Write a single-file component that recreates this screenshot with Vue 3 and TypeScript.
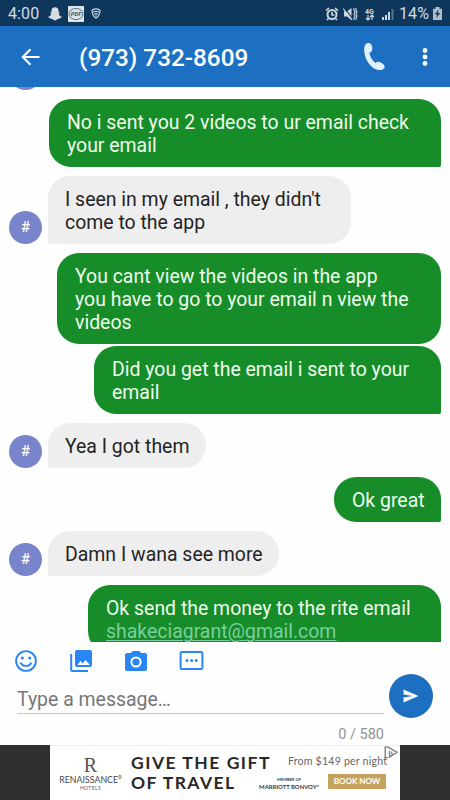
<script setup lang="ts">
interface Message {
  id: number
  sent: boolean
  lines: string[]
  width: number
  height: number
  link?: string
  grouped?: boolean
}

const messages: Message[] = [
  { id: 1, sent: true, lines: ['No i sent you 2 videos to ur email check', 'your email'], width: 392, height: 68 },
  { id: 2, sent: false, lines: ['I seen in my email , they didn\'t', 'come to the app'], width: 303, height: 68 },
  { id: 3, sent: true, lines: ['You cant view the videos in the app', 'you have to go to your email n view the', 'videos'], width: 384, height: 91, grouped: true },
  { id: 4, sent: true, lines: ['Did you get the email i sent to your', 'email'], width: 347, height: 68 },
  { id: 5, sent: false, lines: ['Yea I got them'], width: 158, height: 45 },
  { id: 6, sent: true, lines: ['Ok great'], width: 107, height: 45 },
  { id: 7, sent: false, lines: ['Damn I wana see more'], width: 231, height: 45 },
  { id: 8, sent: true, lines: ['Ok send the money to the rite email'], link: 'shakeciagrant@gmail.com', width: 353, height: 68 },
]
</script>

<template>
  <div class="screen">
    <div class="status">
      <span class="clock">4:00</span>
      <svg class="ghost" width="14" height="14" viewBox="0 0 14 14"><path fill="#d5dce4" d="M7 .3c2.4 0 3.6 1.6 3.6 3.6v1.500l1.200-.2c.5.4-.2 1-1 1.300.3 1.800 1.300 2.800 3 3.400-.2.8-1.300.9-2.100 1.100-.2.5-.2.9-.6.9-1 0-1.500-.1-2.200.5-1.200 1.300-2.700 1.300-3.800 0-.7-.6-1.200-.5-2.200-.5-.4 0-.4-.4-.6-.9C1.500 10.800.4 10.700.2 9.900c1.700-.6 2.700-1.600 3-3.400-.8-.3-1.500-.9-1-1.300l1.200.2V3.900C3.400 1.900 4.600.3 7 .3z" /></svg>
      <svg class="pdf" width="16" height="16" viewBox="0 0 16 16">
        <rect width="16" height="16" fill="#dce4e9" /><ellipse cx="8" cy="8" rx="7" ry="5.600" fill="none" stroke="#5b7286" stroke-width="1" />
        <text x="8" y="10.200" text-anchor="middle" font-size="6" font-style="italic" font-weight="700" fill="#38546c">PDF</text>
      </svg>
      <svg class="shield" width="10" height="11" viewBox="0 0 10 11"><path d="M1 2.200Q5-.4 9 2.200C9.100 6 7.600 8.700 5 10.200 2.400 8.700.9 6 1 2.200zM2 4.100Q5 2.300 8 4.100M3 6.200q2-1.200 4 0M4.200 8h1.600" fill="none" stroke="#cdd9e4" stroke-width="1.100" /></svg>
      <div class="indicators">
        <svg width="14" height="14" viewBox="0 0 14 14" fill="none" stroke="#cbd7e1"><circle cx="7" cy="7.500" r="4.500" stroke-width="2" /><path d="M1 3.600 4 1M13 3.600 10 1M7 5v3h2.400M3.500 11.500 2 13M10.500 11.500 12 13" stroke-width="1.600" /></svg>
        <svg class="mute" width="15" height="14" viewBox="0 0 15 14"><path fill="#cbd7e1" d="M1 4.500h3L8.500 1v12L4 9.500H1z" /><path d="M1 .5 10 12" stroke="#0f375c" stroke-width="1.200" /><path d="M.2 1.500 9 13M11 1v2l1 2-1 2 1 2-1 2v2M13 1v2l1 2-1 2 1 2-1 2v2" fill="none" stroke="#cbd7e1" stroke-width="1.100" /></svg>
        <svg class="data" width="10" height="14" viewBox="0 0 10 14"><text x="0" y="6.500" font-size="7" font-weight="700" fill="#cbd7e1">4G</text><path d="M3 8v5M1 11l2 2 2-2M7 13V8M5 10l2-2 2 2" fill="none" stroke="#cbd7e1" stroke-width="1.200" /></svg>
        <svg class="signal" width="12" height="12" viewBox="0 0 12 12"><path fill="#cbd7e1" d="M0 9h2v3H0zM3 7h2v5H3zM6 4h2v8H6z" /><path fill="#58758f" d="M9.500 1h2v11h-2z" /></svg>
        <span class="percent">14%</span>
        <svg class="battery" width="9" height="13" viewBox="0 0 9 13"><path fill="#aebdca" d="M2.500 0h4v1.700H9V13H0V1.700h2.500z" /><path fill="#173b5c" d="M5.600 2.600 1.800 7.300h2.300l-.8 3.600 4-5H4.900z" /></svg>
      </div>
    </div>

    <header class="header">
      <svg class="back" width="20" height="18" viewBox="0 0 20 18"><path d="M18.500 9H2M9.500 1.300 1.800 9l7.700 7.700" fill="none" stroke="#fff" stroke-width="2.100" /></svg>
      <h1 class="title">(973) 732-8609</h1>
      <svg class="phone" width="23" height="29" viewBox="0 0 23 29"><path fill="#e0f0ff" d="M1.200 8C1.200 3.800 2.500 1 5.300 1c2.600 0 4 2.600 4 5.200 0 2.400-.8 3.900-2.900 4.700.8 4 3.100 7.700 6 10 1.500-1.300 3.100-1.600 5.300-.4 2.500 1.200 4.500 3.300 3.900 4.900-.7 1.900-3.500 3-6.200 2.600C7.800 26.900 1.200 17 1.200 8z" /></svg>
      <svg class="more" width="6" height="20" viewBox="0 0 6 20" fill="#fff"><circle cx="3" cy="3.500" r="2.400" /><circle cx="3" cy="10" r="2.400" /><circle cx="3" cy="16.500" r="2.400" /></svg>
    </header>

    <main class="chat">
      <div class="row earlier"><div class="avatar"></div></div>
      <div v-for="m in messages" :key="m.id" class="row" :class="{ sent: m.sent, grouped: m.grouped }">
        <div v-if="!m.sent" class="avatar">#</div>
        <div class="bubble" :style="{ width: m.width + 'px', height: m.height + 'px' }">
          <div v-for="line in m.lines" :key="line">{{ line }}</div>
          <a v-if="m.link" class="link">{{ m.link }}</a>
        </div>
      </div>
    </main>

    <section class="composer">
      <div class="entry">
        <div class="tools">
          <svg width="24" height="24" viewBox="0 0 24 24"><circle cx="12" cy="12" r="9.900" fill="none" stroke="#2b86f5" stroke-width="1.900" /><g fill="#2b86f5"><circle cx="8.300" cy="9" r="1.600" /><circle cx="15.700" cy="9" r="1.600" /></g><path d="M6.600 13.500c2.100 4.500 8.700 4.500 10.800 0" fill="none" stroke="#2b86f5" stroke-width="1.800" /></svg>
          <svg width="24" height="24" viewBox="0 0 24 24"><path fill="#2b86f5" d="M23 16V3c0-1.100-.9-2-2-2H8C6.900 1 6 1.900 6 3v13c0 1.100.9 2 2 2h13c1.100 0 2-.9 2-2zM8.500 16l3-4 2.300 2.400 2.700-3.400 4.500 5zM1.200 5v16c0 1.100.9 2 2 2H19v-2H3.200V5z" fill-rule="evenodd" /></svg>
          <svg width="24" height="24" viewBox="0 0 24 24"><path fill="#2b86f5" fill-rule="evenodd" d="M8.700 2 6.800 4H3C1.900 4 1 4.900 1 6v14c0 1.100.9 2 2 2h18c1.100 0 2-.9 2-2V6c0-1.100-.9-2-2-2h-3.800l-1.900-2zM12 7.400a5.600 5.600 0 1 1 0 11.200 5.600 5.600 0 0 1 0-11.200z" /><circle cx="12" cy="13" r="3.600" fill="#2b86f5" /></svg>
          <svg width="25" height="24" viewBox="0 0 25 24"><rect x="1.600" y="3" width="21.800" height="17" rx="1.300" fill="none" stroke="#2b86f5" stroke-width="2" /><g fill="#2b86f5"><circle cx="8" cy="11.500" r="1.500" /><circle cx="12.600" cy="11.500" r="1.500" /><circle cx="17.200" cy="11.500" r="1.500" /></g></svg>
        </div>
        <div class="field">Type a message…</div>
        <div class="counter">0 / 580</div>
      </div>
      <div class="send"><svg width="16" height="14" viewBox="0 0 16 14"><path fill="#fff" d="M.5.5 15.500 7 .5 13.500V8.600L9.700 7 .5 5.400z" /></svg></div>
    </section>

    <footer class="adbar">
      <div class="ad">
        <div class="hotel"><span class="monogram">R</span><span class="brand">RENAISSANCE<i>°</i></span><span class="hotels">HOTELS</span></div>
        <div class="slogan"><div class="line-one">GIVE THE GIFT</div><div class="line-two">OF TRAVEL</div></div>
        <div class="offer">
          <div class="price">From $149 per night</div>
          <div class="deal"><div class="member"><span class="member-of">MEMBER OF</span><span>MARRIOTT BONVOY<i>°</i></span></div><div class="book">BOOK NOW</div></div>
        </div>
        <svg class="choices" width="15" height="13" viewBox="0 0 15 13"><path d="M4 11.700H1.200V1.200h3L13 6.300 5.500 11V4.800M7.800 5.500v3" fill="none" stroke="#777" stroke-width="1.300" /></svg>
      </div>
    </footer>
  </div>
</template>

<style>
body { margin: 0; background: #fff; }
</style>

<style scoped>
* { box-sizing: border-box; }
svg { flex: none; display: block; }
.screen { width: 450px; height: 800px; display: flex; flex-direction: column; overflow: hidden; background: #fefefe; font-family: Roboto, sans-serif; }
.status { height: 26px; flex: none; display: flex; align-items: center; padding: 1px 8px 0 8px; background: #0f375c; color: #d2dce5; }
.clock { width: 33px; font-size: 16px; letter-spacing: .1px; white-space: nowrap; }
.ghost { margin-left: 7px; }
.pdf { margin-left: 6px; }
.shield { margin-left: 7px; }
.indicators { margin-left: auto; display: flex; align-items: center; }
.mute { margin-left: 4px; }
.data { margin-left: 7px; }
.signal { margin-left: 7px; }
.percent { width: 31px; margin-left: 5px; font-size: 16px; letter-spacing: .1px; white-space: nowrap; }
.battery { margin-left: 3px; }
.header { height: 61px; flex: none; display: flex; align-items: center; padding: 0 22px 0 21px; background: #1d70c1; }
.title { margin: 2px 0 0 38px; font-size: 24.300px; line-height: 28px; font-weight: 500; color: #fff; white-space: nowrap; }
.phone { margin-left: auto; }
.more { margin-left: 36px; }
.chat { height: 555px; flex: none; overflow: hidden; padding-right: 9px; padding-left: 9px; }
.row { display: flex; align-items: flex-end; gap: 6px; margin-bottom: 9px; }
.row.earlier { margin-top: -30px; }
.row:nth-child(3) { margin-bottom: 8.600px; }
.row.sent { justify-content: flex-end; }
.row.grouped { margin-bottom: 2.200px; }
.avatar { width: 33px; height: 33px; flex: none; border-radius: 50%; background: #7984cb; color: #fff; font-size: 15px; font-weight: 500; line-height: 33px; text-align: center; }
.bubble { flex: none; padding: 12px 17px 0; border-radius: 22px 22px 22px 2px; background: #eee; color: #242424; font-size: 19.460px; line-height: 23.300px; white-space: nowrap; }
.sent .bubble { padding-left: 18px; border-radius: 22px 22px 2px 22px; background: #168d28; color: #effbed; }
.sent.grouped .bubble { border-radius: 22px; }
.link { color: #7bcf9f; text-decoration: underline; text-decoration-thickness: 1px; text-underline-offset: 2px; }
.composer { height: 103px; flex: none; display: flex; padding: 7px 17px 0; justify-content: space-between; }
.entry { width: 367px; }
.tools { display: flex; gap: 31px; margin-left: -3px; }
.field { height: 41px; padding-top: 15px; border-bottom: 1.500px solid #b6cbda; color: #777; font-size: 19.460px; line-height: 24px; }
.counter { margin-top: 12px; font-size: 14.500px; line-height: 18px; text-align: right; color: #929292; }
.send { width: 44px; height: 44px; flex: none; display: flex; align-items: center; justify-content: center; margin: 25px 0 0 0; border-radius: 50%; background: #1d70c1; }
.adbar { height: 55px; flex: none; padding: 0 50px; background: #303030; }
.ad { position: relative; display: flex; height: 55px; background: #fff; font-family: Lato, sans-serif; border-top: 1px solid #eee; }
.ad i { font-style: normal; }
.hotel { width: 81px; padding-top: 10px; display: flex; flex-direction: column; align-items: center; color: #555; }
.monogram { font: 20px/18px "Liberation Serif", serif; }
.brand { font-size: 8.800px; line-height: 9px; margin-top: 1px; color: #444; white-space: nowrap; }
.hotels { font-size: 5px; line-height: 8px; letter-spacing: .4px; }
.slogan { width: 145px; padding-top: 7px; font-size: 17.500px; line-height: 19.500px; font-weight: 700; color: #292929; white-space: nowrap; }
.line-one { letter-spacing: 1.500px; }
.line-two { letter-spacing: 1.450px; }
.offer { padding: 8px 0 0 7px; }
.price { width: 105px; margin-left: 5px; font-size: 10.600px; line-height: 15px; color: #666; white-space: nowrap; letter-spacing: .2px; }
.deal { display: flex; align-items: flex-start; margin-top: 5px; }
.member { width: 70px; padding-top: 3px; display: flex; flex-direction: column; align-items: center; font-size: 5.900px; line-height: 7px; font-weight: 700; color: #383838; white-space: nowrap; margin-left: -29px; }
.member-of { font-size: 4px; line-height: 6px; }
.book { width: 58px; height: 15px; margin-left: 4px; background: #c6a35c; color: #fff; font-size: 8px; font-weight: 700; line-height: 15px; text-align: center; white-space: nowrap; }
.choices { position: absolute; top: 0; right: 1px; }
</style>
